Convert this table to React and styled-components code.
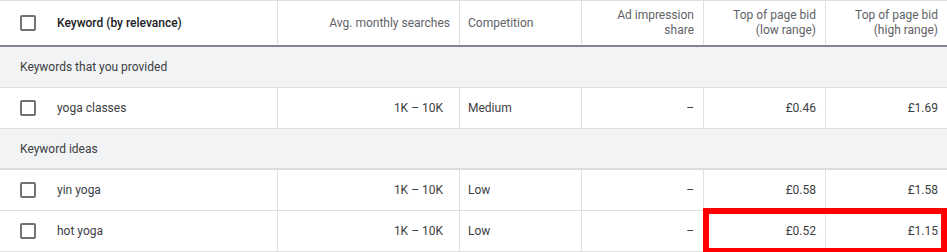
import React from 'react';
import styled, { createGlobalStyle } from 'styled-components';

const GlobalStyle = createGlobalStyle`
  html, body {
    margin: 0;
    padding: 0;
    background: #fff;
  }
  body {
    font-family: Roboto, 'Liberation Sans', Arial, sans-serif;
    -webkit-font-smoothing: antialiased;
  }
`;

const COLUMNS = '278px 182px 122px 122px 122px 121px';

const Table = styled.div`
  position: relative;
  width: 947px;
  border-top: 1px solid #e0e0e0;
  font-size: 12px;
  color: #3c4043;
`;

const Row = styled.div`
  display: grid;
  grid-template-columns: ${COLUMNS};
  height: ${(p) => p.height || 41}px;
  box-sizing: border-box;
  border-bottom: ${(p) => (p.header ? '2px solid #80868b' : '1px solid #e0e0e0')};
`;

const Cell = styled.div`
  display: flex;
  align-items: center;
  justify-content: ${(p) => (p.right ? 'flex-end' : 'flex-start')};
  text-align: ${(p) => (p.right ? 'right' : 'left')};
  padding: 0 ${(p) => p.padRight || 9}px 0 ${(p) => p.padLeft || 8}px;
  border-right: ${(p) => (p.last ? 'none' : '1px solid #e0e0e0')};
  box-sizing: border-box;
  line-height: 15px;
  white-space: nowrap;
`;

const HeadCell = styled(Cell)`
  color: #5f6368;
  font-size: 12px;
`;

const KeywordCell = styled(Cell)`
  padding-left: 20px;
  gap: 21px;
`;

const HeadTitle = styled.span`
  font-weight: 500;
  color: #202124;
`;

const Checkbox = styled.span`
  display: inline-block;
  width: 16px;
  height: 16px;
  box-sizing: border-box;
  border: 2px solid #6f7377;
  border-radius: 2px;
  flex-shrink: 0;
`;

const GroupRow = styled.div`
  display: flex;
  align-items: center;
  height: 41px;
  box-sizing: border-box;
  padding-left: 20px;
  background: #f1f3f4;
  border-bottom: ${(p) => (p.thick ? '2px solid #dadce0' : '1px solid #e0e0e0')};
`;

const Highlight = styled.div`
  position: absolute;
  left: 703px;
  top: 207px;
  width: 244px;
  height: 46px;
  box-sizing: border-box;
  border: 6px solid #ff0000;
  pointer-events: none;
`;

const groups = [
  {
    title: 'Keywords that you provided',
    rows: [{ kw: 'yoga classes', searches: '1K – 10K', comp: 'Medium', low: '£0.46', high: '£1.69' }],
  },
  {
    title: 'Keyword ideas',
    thick: true,
    rows: [
      { kw: 'yin yoga', searches: '1K – 10K', comp: 'Low', low: '£0.58', high: '£1.58' },
      { kw: 'hot yoga', searches: '1K – 10K', comp: 'Low', low: '£0.52', high: '£1.15' },
    ],
  },
];

const DataRow = ({ row }) => (
  <Row>
    <KeywordCell>
      <Checkbox />
      <span>{row.kw}</span>
    </KeywordCell>
    <Cell right padRight={16}>{row.searches}</Cell>
    <Cell>{row.comp}</Cell>
    <Cell right>–</Cell>
    <Cell right>{row.low}</Cell>
    <Cell right last>{row.high}</Cell>
  </Row>
);

const App = () => (
  <>
    <GlobalStyle />
    <Table>
      <Row header height={46}>
        <KeywordCell>
          <Checkbox />
          <HeadTitle>Keyword (by relevance)</HeadTitle>
        </KeywordCell>
        <HeadCell right>Avg. monthly searches</HeadCell>
        <HeadCell>Competition</HeadCell>
        <HeadCell right>
          Ad impression
          <br />
          share
        </HeadCell>
        <HeadCell right>
          Top of page bid
          <br />
          (low range)
        </HeadCell>
        <HeadCell right last>
          Top of page bid
          <br />
          (high range)
        </HeadCell>
      </Row>
      {groups.map((g) => (
        <React.Fragment key={g.title}>
          <GroupRow thick={g.thick}>{g.title}</GroupRow>
          {g.rows.map((r) => (
            <DataRow key={r.kw} row={r} />
          ))}
        </React.Fragment>
      ))}
      <Highlight />
    </Table>
  </>
);

export default App;
